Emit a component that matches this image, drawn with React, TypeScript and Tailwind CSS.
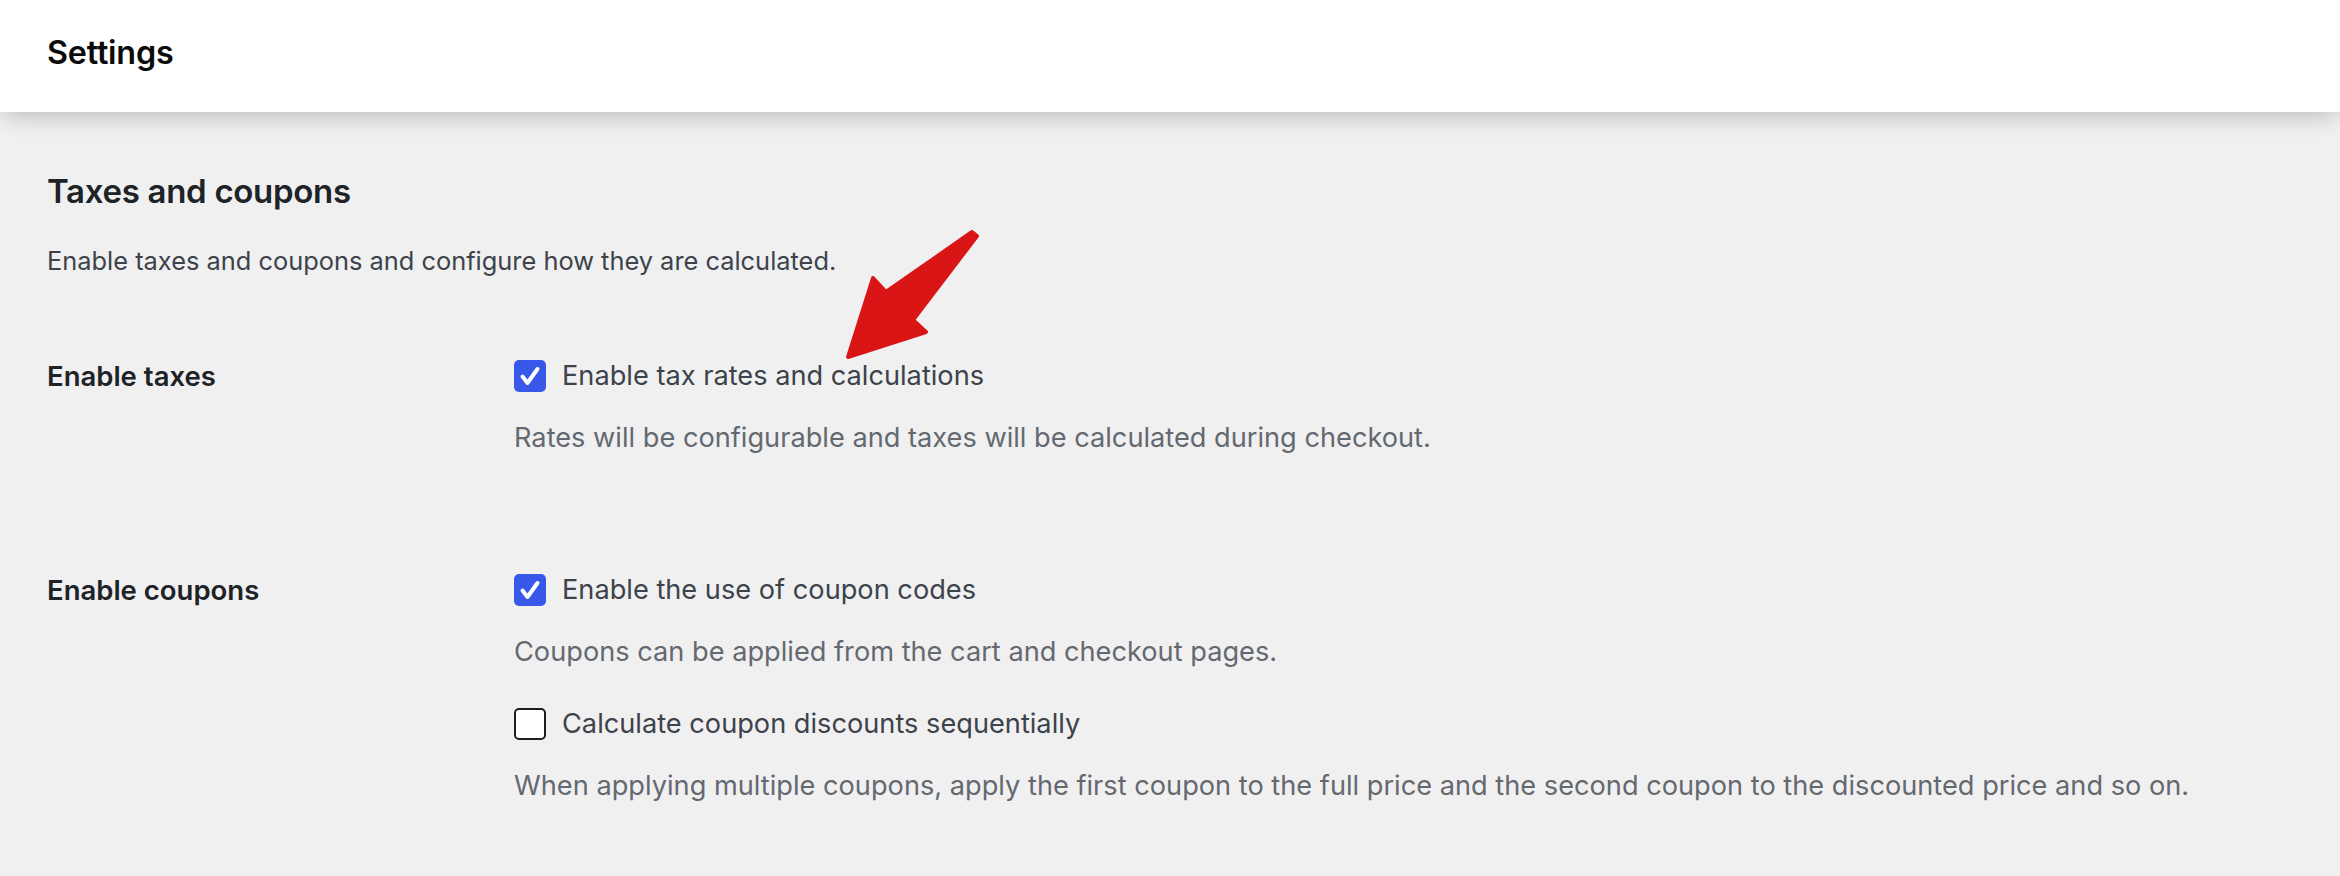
import React from "react";

function Checkbox({ checked }: { checked: boolean }) {
  if (checked) {
    return (
      <span className="flex h-[32px] w-[32px] shrink-0 items-center justify-center rounded-[5px] bg-[#3858e9]">
        <svg width="32" height="32" viewBox="0 0 32 32" fill="none">
          <path d="M8.5 16.5l5 6.5L23.5 9" stroke="#ffffff" strokeWidth="4" strokeLinecap="round" strokeLinejoin="round" />
        </svg>
      </span>
    );
  }
  return <span className="block h-[32px] w-[32px] shrink-0 rounded-[5px] border-[2.5px] border-[#1e1e1e] bg-white" />;
}

function Option({ checked, label, help, first }: { checked: boolean; label: string; help: string; first?: boolean }) {
  return (
    <div className={first ? "" : "mt-[38px]"}>
      <label className="flex items-center gap-[16px]">
        <Checkbox checked={checked} />
        <span className="text-[27.2px] leading-[32px] text-[#3c434a]">{label}</span>
      </label>
      <p className="mt-[28px] text-[27.2px] leading-[36px] text-[#646970]">{help}</p>
    </div>
  );
}

export default function App() {
  return (
    <div className="relative min-h-screen bg-[#f0f0f1] font-['Inter','Noto_Sans',sans-serif]">
      <header className="relative z-10 flex h-[112px] items-center bg-white px-[47px] pb-[6px] shadow-[0_8px_22px_-4px_rgba(0,0,0,0.22)]">
        <h1 className="text-[32.3px] font-semibold leading-[40px] tracking-[-0.2px] text-[#0b0b0b]">Settings</h1>
      </header>
      <main className="px-[47px] pt-[59px]">
        <h2 className="text-[33px] font-semibold leading-[40px] tracking-[-0.3px] text-[#1d2327]">Taxes and coupons</h2>
        <p className="mt-[32px] text-[25.4px] leading-[36px] text-[#3c434a]">
          Enable taxes and coupons and configure how they are calculated.
        </p>
        <div className="mt-[81px] grid grid-cols-[467px_1fr]">
          <div className="text-[27.5px] font-semibold leading-[32px] text-[#1d2327]">Enable taxes</div>
          <div>
            <Option first checked label="Enable tax rates and calculations" help="Rates will be configurable and taxes will be calculated during checkout." />
          </div>
          <div className="mt-[118px] text-[27.5px] font-semibold leading-[32px] text-[#1d2327]">Enable coupons</div>
          <div className="mt-[118px]">
            <Option first checked label="Enable the use of coupon codes" help="Coupons can be applied from the cart and checkout pages." />
            <Option
              checked={false}
              label="Calculate coupon discounts sequentially"
              help="When applying multiple coupons, apply the first coupon to the full price and the second coupon to the discounted price and so on."
            />
          </div>
        </div>
      </main>
      <svg className="pointer-events-none absolute left-0 top-0" width="1000" height="400" viewBox="0 0 1000 400">
        <polygon
          points="972,232 977,236 913,320 926,332 848,357 873,278 886,292"
          fill="#d91515"
          stroke="#d91515"
          strokeWidth="4"
          strokeLinejoin="round"
        />
      </svg>
    </div>
  );
}
